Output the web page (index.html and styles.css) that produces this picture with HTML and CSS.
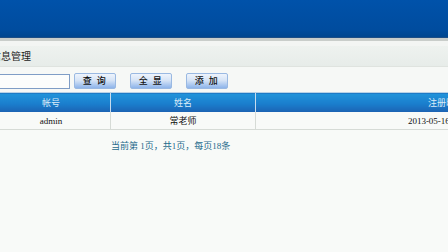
FILE: index.html
```html
<!DOCTYPE html>
<html lang="zh">
<head>
<meta charset="utf-8">
<link rel="stylesheet" href="styles.css">
</head>
<body>
<div class="top"></div>
<div class="sep"></div>
<div class="titlebar"><span class="title">信息管理</span></div>
<div class="toolbar">
  <input class="search" type="text">
  <button class="btn">查&nbsp;询</button>
  <button class="btn">全&nbsp;显</button>
  <button class="btn">添&nbsp;加</button>
</div>
<table class="grid">
  <thead>
    <tr><th class="c1">帐号</th><th class="c2">姓名</th><th class="c3">注册时间</th></tr>
  </thead>
  <tbody>
    <tr><td class="c1">admin</td><td class="c2">常老师</td><td class="c3">2013-05-16 00:00:00</td></tr>
  </tbody>
</table>
<div class="pager">当前第 1页，共1页，每页18条</div>
</body>
</html>
```
FILE: styles.css
```css
html, body {
  margin: 0;
  padding: 0;
  width: 448px;
  height: 252px;
  overflow: hidden;
  background: #f8faf8;
  font-family: "Liberation Serif", "Noto Sans CJK SC", serif;
  font-size: 9px;
}
.top {
  height: 37px;
  background: linear-gradient(#0052aa, #004c9e 80%, #00468f);
  border-bottom: 1px solid #1d4e86;
}
.sep {
  height: 3px;
  background: #c9cdca;
  border-bottom: 5px solid #f3f5f3;
}
.titlebar {
  height: 20px;
  background: linear-gradient(#eef2ef, #e7ece9);
  border-bottom: 1px solid #dfe3df;
  display: flex;
  align-items: center;
  overflow: hidden;
}
.title {
  margin-left: -9px;
  margin-top: -1px;
  font-size: 10px;
  color: #222;
  font-family: "Noto Sans CJK SC", sans-serif;
}
.toolbar {
  display: flex;
  align-items: center;
  gap: 14px;
  padding: 6px 0 3px 0;
  background: #f6f8f6;
}
.search {
  margin: 0 -10px 0 -10px;
  width: 80px;
  height: 15px;
  box-sizing: border-box;
  border: 1px solid #7f9dc6;
  background: #fcfdfc;
  padding: 0;
}
.btn {
  width: 42px;
  height: 16px;
  padding: 0;
  margin: 0;
  border: 1px solid #9ab9e2;
  border-radius: 2px;
  background: linear-gradient(#eef4fc, #d6e4f6 45%, #8db4ea);
  font-family: "Noto Sans CJK SC", sans-serif;
  font-size: 9px;
  font-weight: 500;
  letter-spacing: 1.5px;
  color: #111;
  line-height: 14px;
}
.grid {
  border-collapse: collapse;
  margin-left: -8px;
  table-layout: fixed;
  width: 644px;
}
.grid th {
  height: 19px;
  padding: 0;
  background: linear-gradient(#2194da, #1a7ecd 55%, #1c62b2);
  border-top: 1px solid #b8d2e6;
  border-left: 1px solid #c6dcee;
  color: #dcecf8;
  font-weight: normal;
  font-family: "Noto Sans CJK SC", sans-serif;
  font-size: 9px;
}
.grid td {
  height: 17px;
  padding: 0;
  text-align: center;
  border-left: 1px solid #d6dbd6;
  border-bottom: 1px solid #d6dbd6;
  color: #111;
  background: #f8faf8;
}
.grid .c1 { width: 118px; border-left: none; }
.grid .c2 { width: 144px; }
.grid .c3 { width: 380px; }
.grid td.c2 { font-family: "Noto Sans CJK SC", sans-serif; }
.pager {
  padding: 9px 0 0 111px;
  color: #1f6a8c;
  font-size: 9px;
}
```
